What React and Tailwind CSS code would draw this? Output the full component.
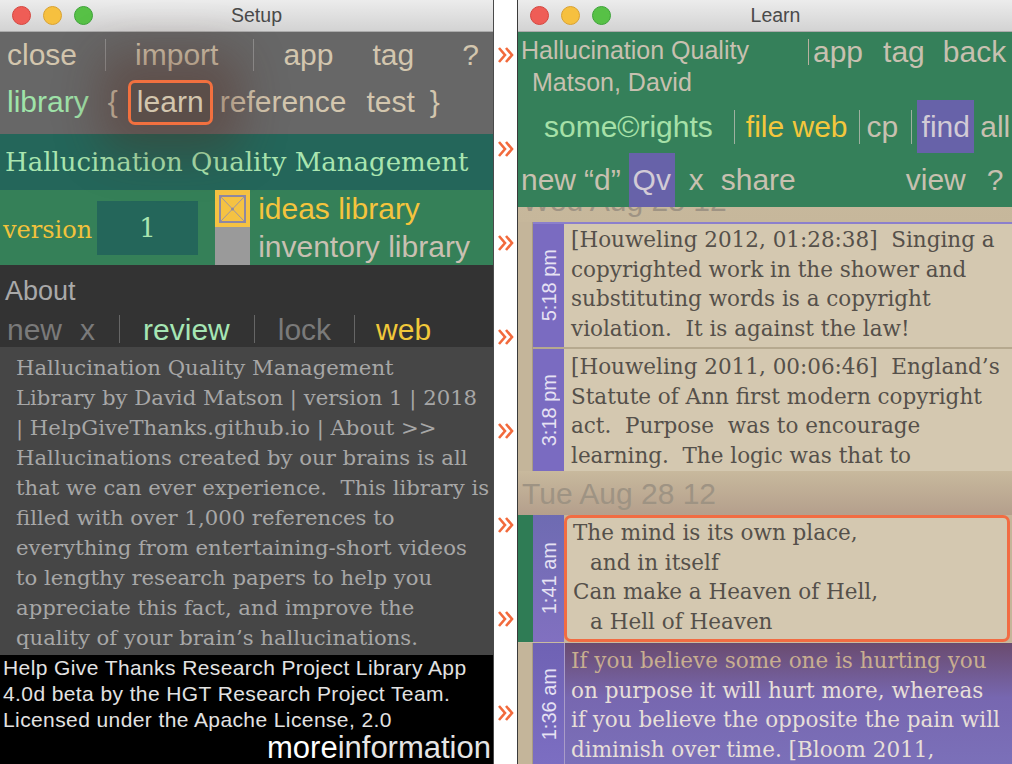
import React from "react";

const sans = "font-['Liberation_Sans',Arial,sans-serif]";
const serif = "font-['DejaVu_Serif',Georgia,serif]";

function Lights() {
  return (
    <div className="absolute left-[12px] top-[6px] flex items-center gap-[12px]">
      <span className="h-[19px] w-[19px] rounded-full border border-[#d5463f] bg-[#ef5d56]" />
      <span className="h-[19px] w-[19px] rounded-full border border-[#d9a232] bg-[#f6c03f]" />
      <span className="h-[19px] w-[19px] rounded-full border border-[#3ea33a] bg-[#57c146]" />
    </div>
  );
}

function TitleBar({ title, shift }) {
  return (
    <div className="relative flex h-[32px] shrink-0 items-center border-b border-[#ababab] bg-linear-to-b from-[#ececec] to-[#d3d3d3]">
      <Lights />
      <div className={`w-full text-center text-[19.5px] text-[#4a4a4a] ${sans} ${shift}`}>
        {title}
      </div>
    </div>
  );
}

function Sep({ className }) {
  return <span className={`w-px shrink-0 ${className}`} />;
}

function Chevrons() {
  return (
    <svg width="18" height="20" viewBox="0 0 18 20" className="shrink-0">
      <polyline points="2,3 8,10 2,17" fill="none" stroke="#f26a3c" strokeWidth="2.6" />
      <polyline points="9,3 15,10 9,17" fill="none" stroke="#f26a3c" strokeWidth="2.6" />
    </svg>
  );
}

function SetupWindow() {
  const about = [
    "Hallucination Quality Management",
    "Library by David Matson | version 1 | 2018",
    "| HelpGiveThanks.github.io | About >>",
    "Hallucinations created by our brains is all",
    "that we can ever experience.  This library is",
    "filled with over 1,000 references to",
    "everything from entertaining-short videos",
    "to lengthy research papers to help you",
    "appreciate this fact, and improve the",
    "quality of your brain’s hallucinations.",
  ];
  return (
    <div className="flex h-[764px] w-[494px] shrink-0 flex-col overflow-hidden border-r border-[#4a4a4a] bg-[#464646]">
      <TitleBar title="Setup" shift="pl-[20px]" />

      <div className={`h-[102px] shrink-0 bg-[#676767] text-[30px] leading-[34px] text-[#d3c6ae] ${sans}`}>
        <div className="flex h-[46px] items-center pl-[7px]">
          <span>close</span>
          <Sep className="ml-[28px] h-[32px] bg-[#8d8d8d]" />
          <span className="ml-[29px]">import</span>
          <Sep className="ml-[35px] h-[32px] bg-[#8d8d8d]" />
          <span className="ml-[29px]">app</span>
          <span className="ml-[39px]">tag</span>
          <span className="ml-[48px]">?</span>
        </div>
        <div className="flex h-[48px] items-center pl-[7px]">
          <span className="text-[#9fe3a9]">library</span>
          <span className="ml-[19px]">{"{"}</span>
          <span className="relative z-10 ml-[10px] flex h-[45px] w-[85px] items-center justify-center rounded-[7px] border-[3px] border-[#f2703f] bg-[#5b4e49] shadow-[0_0_45px_28px_rgba(80,38,28,0.36)]">
            learn
          </span>
          <span className="ml-[7px]">reference</span>
          <span className="ml-[20px]">test</span>
          <span className="ml-[15px]">{"}"}</span>
        </div>
      </div>

      <div className={`flex h-[56px] shrink-0 items-center bg-[#24665a] pl-[5px] text-[26px] text-[#a9e5b0] ${serif}`}>
        Hallucination Quality Management
      </div>

      <div className="flex h-[75px] shrink-0 bg-[#358058]">
        <div className={`flex items-center pl-[3px] pt-[4px] text-[24px] text-[#f2c23c] ${serif}`}>version</div>
        <div className={`ml-[5px] mt-[11px] flex h-[54px] w-[101px] items-center justify-center bg-[#24665a] text-[26px] text-[#a9e5b0] ${serif}`}>
          1
        </div>
        <div className="ml-[17px] flex w-[35px] flex-col">
          <div className="flex h-[37px] items-center justify-center bg-[#f5c242]">
            <svg width="27" height="28" viewBox="0 0 27 28">
              <rect x="1" y="1" width="25" height="26" fill="none" stroke="#8e88a2" strokeWidth="2" />
              <line x1="2" y1="2" x2="25" y2="26" stroke="#9a94a8" strokeWidth="1" />
              <line x1="25" y1="2" x2="2" y2="26" stroke="#9a94a8" strokeWidth="1" />
              <circle cx="13.5" cy="14" r="1.5" fill="#8e88a2" />
            </svg>
          </div>
          <div className="h-[38px] bg-[#9a9a9a]" />
        </div>
        <div className={`ml-[8px] flex flex-col text-[30px] ${sans}`}>
          <span className="flex h-[37px] items-center text-[#f5c43d]">ideas library</span>
          <span className="flex h-[38px] items-center text-[#c9c0b2]">inventory library</span>
        </div>
      </div>

      <div className={`h-[82px] shrink-0 bg-[#333333] ${sans}`}>
        <div className="pl-[5px] pt-[11px] text-[27px] leading-[30px] text-[#a9a9a9]">About</div>
        <div className="mt-[5px] flex h-[36px] items-center pl-[7px] text-[30px] text-[#7a7a7a]">
          <span>new</span>
          <span className="ml-[18px]">x</span>
          <Sep className="ml-[24px] h-[28px] bg-[#666666]" />
          <span className="ml-[23px] text-[#a6e6b4]">review</span>
          <Sep className="ml-[24px] h-[28px] bg-[#666666]" />
          <span className="ml-[23px]">lock</span>
          <Sep className="ml-[23px] h-[28px] bg-[#666666]" />
          <span className="ml-[21px] text-[#f1c83a]">web</span>
        </div>
      </div>

      <div className={`h-[308px] shrink-0 whitespace-pre bg-[#464646] pl-[16px] pt-[6px] text-[21.2px] leading-[30px] text-[#a7a7a7] ${serif}`}>
        {about.map((l) => (
          <div key={l}>{l}</div>
        ))}
      </div>

      <div className={`flex h-[109px] shrink-0 flex-col bg-black pl-[3px] pr-[2px] text-[#e2e2e2] ${sans}`}>
        <div className="text-[21px] leading-[26px] tracking-[0.4px]">
          <div>Help Give Thanks Research Project Library App</div>
          <div>4.0d beta by the HGT Research Project Team.</div>
          <div>Licensed under the Apache License, 2.0</div>
        </div>
        <div className="text-right text-[31px] leading-[30px]">
          <span className="text-white">more</span>
          <span className="text-[#e6e6e6]">information</span>
        </div>
      </div>
    </div>
  );
}

function DateHeader({ label, className }) {
  return (
    <div
      className={`flex h-[44px] shrink-0 items-center pl-[4px] text-[30px] text-[#9e9383] ${sans} bg-linear-to-b from-[#c8b99d] to-[#b49f8c] ${className}`}
    >
      {label}
    </div>
  );
}

function TimeStrip({ time, className }) {
  return (
    <div className={`flex w-[31px] shrink-0 items-center justify-center ${className}`}>
      <span className={`rotate-180 whitespace-nowrap text-[20px] leading-[20px] text-[#e6e2f3] [writing-mode:vertical-rl] ${sans}`}>
        {time}
      </span>
    </div>
  );
}

function LearnWindow() {
  const dark = "text-[#55504a]";
  return (
    <div className="flex h-[764px] flex-1 flex-col overflow-hidden border-l border-[#3a3a3a] bg-[#c4b59a]">
      <TitleBar title="Learn" shift="pl-[21px]" />

      <div className={`flex h-[175px] shrink-0 flex-col bg-[#35805a] text-[#c8c0b0] ${sans}`}>
        <div className="flex h-[66px]">
          <div className="w-[290px] shrink-0 pt-[2px] text-[25px] leading-[32px]">
            <div className="pl-[3px]">Hallucination Quality</div>
            <div className="pl-[14px]">Matson, David</div>
          </div>
          <div className="mt-[5px] flex h-[30px] items-center text-[30px] leading-[30px]">
            <Sep className="h-[26px] bg-[#b8b09f]" />
            <span className="ml-[4px]">app</span>
            <span className="ml-[20px]">tag</span>
            <span className="ml-[18px]">back</span>
          </div>
        </div>
        <div className="flex h-[55px] items-center whitespace-nowrap pl-[26px] pt-[2px] text-[30px] leading-[30px]">
          <span className="text-[#a6e0a8]">some©rights</span>
          <Sep className="ml-[21px] h-[34px] bg-[#9fb0a0]" />
          <span className="ml-[11px] text-[#f4c73c]">file web</span>
          <Sep className="ml-[11px] h-[34px] bg-[#9fb0a0]" />
          <span className="ml-[7px]">cp</span>
          <Sep className="ml-[13px] h-[34px] bg-[#9fb0a0]" />
          <span className="ml-[5px] flex h-[53px] w-[57px] shrink-0 items-center justify-center bg-[#6762a9] text-[#d2cbd6]">
            find
          </span>
          <span className="ml-[6px]">all</span>
        </div>
        <div className="flex h-[54px] items-center whitespace-nowrap pl-[3px] text-[30px] leading-[30px]">
          <span>new</span>
          <span className="ml-[8px]">“d”</span>
          <span className="ml-[8px] flex h-[54px] w-[46px] shrink-0 items-center justify-center bg-[#6762a9] text-[#d2cbd6]">
            Qv
          </span>
          <span className="ml-[14px]">x</span>
          <span className="ml-[17px]">share</span>
          <span className="ml-[110px]">view</span>
          <span className="ml-[21px]">?</span>
        </div>
      </div>

      {/* previous day header, scrolled mostly out of view */}
      <div className="h-[15px] shrink-0 overflow-hidden bg-[#c6b79b]">
        <DateHeader label="Wed Aug 28 12" className="-mt-[29px] from-[#c6b79b] to-[#c6b79b]" />
      </div>

      <div className="flex h-[127px] shrink-0">
        <div className="w-[15px] shrink-0 border-r border-[#a99c84] bg-[#c4b59a]" />
        <div className="flex flex-1 border-t-2 border-b-2 border-t-[#8b7fcc] border-b-[#b6a98f]">
          <TimeStrip time="5:18 pm" className="bg-[#7a6bc1]" />
          <div className={`flex-1 whitespace-pre bg-[#d4c8b0] pl-[7px] pt-[1px] text-[21.5px] leading-[29.7px] ${dark} ${serif}`}>
            <div>[Houweling 2012, 01:28:38]  Singing a</div>
            <div>copyrighted work in the shower and</div>
            <div>substituting words is a copyright</div>
            <div>violation.  It is against the law!</div>
          </div>
        </div>
      </div>

      <div className="flex h-[122px] shrink-0">
        <div className="w-[15px] shrink-0 border-r border-[#a99c84] bg-[#c4b59a]" />
        <TimeStrip time="3:18 pm" className="bg-[#7a6bc1]" />
        <div className={`flex-1 whitespace-pre bg-[#d4c8b0] pl-[7px] pt-[3px] text-[21.5px] leading-[29.7px] ${dark} ${serif}`}>
          <div>[Houweling 2011, 00:06:46]  England’s</div>
          <div>Statute of Ann first modern copyright</div>
          <div>act.  Purpose  was to encourage</div>
          <div>learning.  The logic was that to</div>
        </div>
      </div>

      <DateHeader label="Tue Aug 28 12" />

      <div className="flex h-[127px] shrink-0">
        <div className="w-[15px] shrink-0 bg-[#2f7c55]" />
        <TimeStrip time="1:41 am" className="bg-linear-to-b from-[#6e6bb2] to-[#8170c0]" />
        <div className={`mr-[2px] flex-1 whitespace-pre rounded-[7px] border-[3px] border-[#f26c42] bg-[#d4c8b0] pl-[6px] text-[21.5px] leading-[29.7px] ${dark} ${serif}`}>
          <div>The mind is its own place,</div>
          <div className="pl-[17px]">and in itself</div>
          <div>Can make a Heaven of Hell,</div>
          <div className="pl-[17px]">a Hell of Heaven</div>
        </div>
      </div>

      <div className="flex flex-1 border-t border-[#c9bba0]">
        <div className="w-[15px] shrink-0 border-r border-[#a99c84] bg-[#c4b59a]" />
        <TimeStrip time="1:36 am" className="bg-linear-to-b from-[#6f62b4] to-[#7c6ec2]" />
        <div
          className={`flex-1 whitespace-pre border-l border-[#a99cc8] bg-linear-to-b from-[#6a4b6f] via-[#7767b0] via-45% to-[#7b70b9] pl-[6px] pt-[3px] text-[21.5px] leading-[29.7px] text-[#e7dfd8] ${serif}`}
        >
          <div className="text-[#c8ae90]">If you believe some one is hurting you</div>
          <div>on purpose it will hurt more, whereas</div>
          <div>if you believe the opposite the pain will</div>
          <div>diminish over time. [Bloom 2011,</div>
        </div>
      </div>
    </div>
  );
}

export default function App() {
  return (
    <div className="flex h-[764px] w-[1012px] overflow-hidden bg-white">
      <SetupWindow />
      <div className="flex w-[23px] shrink-0 flex-col items-center gap-[74px] bg-white pt-[45px]">
        {Array.from({ length: 8 }).map((_, i) => (
          <Chevrons key={i} />
        ))}
      </div>
      <LearnWindow />
    </div>
  );
}
